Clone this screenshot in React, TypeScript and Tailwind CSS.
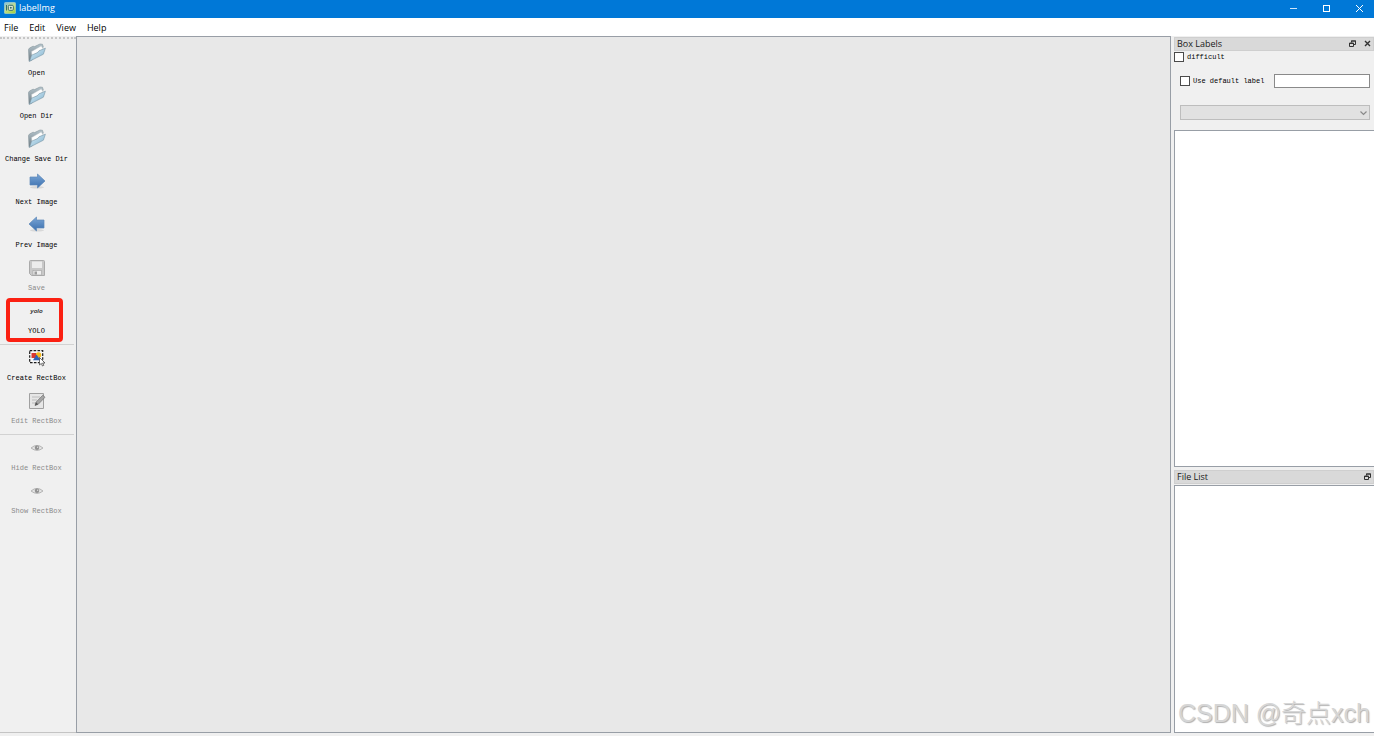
import React from "react";

function FolderIcon() {
  return (
    <svg width="20" height="20" viewBox="0 0 20 20">
      <defs>
        <linearGradient id="folder-front" x1="0" y1="0" x2="1" y2="1">
          <stop offset="0" stopColor="#d8edf7" />
          <stop offset="1" stopColor="#7fb0cd" />
        </linearGradient>
        <linearGradient id="folder-back" x1="0" y1="0" x2="0" y2="1">
          <stop offset="0" stopColor="#b5c5cd" />
          <stop offset="1" stopColor="#6d7a81" />
        </linearGradient>
      </defs>
      <path d="M1.5 6.5 L2.5 5 L6 3.2 L7.5 3.6 L13 1 L15.5 1.3 L16.3 4 L5 17 L2 18.3 Z" fill="url(#folder-back)" stroke="#87959c" strokeWidth="0.6" />
      <path d="M4.5 8.5 L14.3 2.8 L16.2 6 L5 13.5 Z" fill="#fdfdfd" stroke="#b4bcc0" strokeWidth="0.5" />
      <path d="M2.5 18.3 L4.6 12.2 L10.5 9.6 L12 7.8 L18.4 5.2 L16.4 11.2 Z" fill="url(#folder-front)" stroke="#7895a5" strokeWidth="0.6" />
    </svg>
  );
}

function ArrowIcon({ left = false }: { left?: boolean }) {
  return (
    <svg width="20" height="20" viewBox="0 0 20 20">
      <defs>
        <linearGradient id="arrow-fill" x1="0" y1="0" x2="0" y2="1">
          <stop offset="0" stopColor="#7ba6d6" />
          <stop offset="1" stopColor="#3a6fae" />
        </linearGradient>
      </defs>
      <ellipse cx="10" cy="15.3" rx="7" ry="1.2" fill="#d8d8d8" />
      <path
        d={left ? "M2 9 L9.5 2 V5 H17 V13 H9.5 V16 Z" : "M18 9 L10.5 2 V5 H3 V13 H10.5 V16 Z"}
        fill="url(#arrow-fill)"
        stroke="#5c86b8"
        strokeWidth="0.7"
      />
    </svg>
  );
}

function SaveIcon() {
  return (
    <svg width="20" height="20" viewBox="0 0 20 20">
      <path d="M3.5 2.5 H16.5 Q17.5 2.5 17.5 3.5 V17.5 H4.5 L2.5 15.5 V3.5 Q2.5 2.5 3.5 2.5 Z" fill="#c8c8c8" stroke="#aaaaaa" />
      <rect x="5" y="3.5" width="10" height="6.5" fill="#ececec" />
      <rect x="6" y="12.5" width="8.5" height="4.5" fill="#eeeeee" stroke="#a2a2a2" strokeWidth="0.6" />
      <rect x="7.5" y="13.5" width="2.5" height="3" fill="#9c9c9c" />
    </svg>
  );
}

function CreateIcon() {
  return (
    <svg width="20" height="20" viewBox="0 0 20 20">
      <rect x="2.7" y="2.7" width="13" height="12" fill="#f7f7f7" stroke="#1c1c1c" strokeWidth="1.2" strokeDasharray="2.6 1.3" />
      <circle cx="11.5" cy="7" r="2.8" fill="#f4b91e" />
      <path d="M4.5 5 H9 V10 H4.5 Z" fill="#d9382f" />
      <path d="M6 12.3 L9.5 6.5 L13.5 12.3 Z" fill="#2f62b5" />
      <path d="M12.5 9.5 V17 L14.3 15.4 L15.5 18 L16.8 17.3 L15.6 15 H18 Z" fill="#fff" stroke="#333" strokeWidth="0.7" />
    </svg>
  );
}

function EditIcon() {
  return (
    <svg width="20" height="20" viewBox="0 0 20 20">
      <path d="M2.5 2.5 H16.5 V17.5 H2.5 Z" fill="#e6e6e6" stroke="#a0a0a0" />
      <path d="M5 6 H13 M5 9 H10 M5 12 H8" stroke="#bcbcbc" />
      <path d="M8 14.5 L9 11.2 L15.8 4.2 L18 6.3 L11.2 13.3 Z" fill="#a5a5a5" stroke="#707070" strokeWidth="0.7" />
      <path d="M8 14.5 L9 11.2 L11.2 13.3 Z" fill="#555" />
    </svg>
  );
}

function EyeIcon() {
  return (
    <svg width="20" height="20" viewBox="0 0 20 20">
      <path d="M4 10 Q10 4.8 16 10 Q10 14.8 4 10 Z" fill="#e3e3e3" stroke="#b5b5b5" strokeWidth="1" />
      <circle cx="10" cy="9.8" r="2.2" fill="#919191" />
      <circle cx="10.6" cy="9.2" r="0.7" fill="#ddd" />
    </svg>
  );
}

function YoloIcon() {
  return <span className="font-['Liberation_Sans'] text-[6px] leading-5 font-bold text-[#333] italic">yolo</span>;
}

function AppIcon() {
  return (
    <svg width="12" height="12" viewBox="0 0 12 12">
      <defs>
        <linearGradient id="app-icon" x1="0" y1="0" x2="0.6" y2="1">
          <stop offset="0" stopColor="#7fbfe4" />
          <stop offset="0.6" stopColor="#c4e08c" />
          <stop offset="1" stopColor="#a5d14b" />
        </linearGradient>
      </defs>
      <rect x="0.3" y="0.3" width="11.4" height="11.4" rx="1.5" fill="url(#app-icon)" stroke="#a9d2d0" strokeWidth="0.6" />
      <path d="M2.5 3 V8.5" stroke="#376a68" />
      <rect x="4.3" y="3.3" width="5" height="5" rx="1" fill="#e8f2d8" stroke="#376a68" />
      <circle cx="6.8" cy="5.8" r="1" fill="#376a68" />
    </svg>
  );
}

function FloatIcon() {
  return (
    <svg width="7" height="7" viewBox="0 0 7 7" fill="none" stroke="#333">
      <path d="M2.5 2.5 V1 H6.5 V4.5 H5 M2 1 H7" />
      <path d="M0.5 3 H4.5 V6.5 H0.5 Z M0 3.5 H5" />
    </svg>
  );
}

function CloseIcon() {
  return (
    <svg width="7" height="7" viewBox="0 0 7 7">
      <path d="M1 1 L6 6 M6 1 L1 6" stroke="#333" strokeWidth="1.4" />
    </svg>
  );
}

type Tool = {
  label: string;
  icon: React.ReactNode;
  disabled?: boolean;
  highlighted?: boolean;
};

const toolGroups: Tool[][] = [
  [
    { label: "Open", icon: <FolderIcon /> },
    { label: "Open Dir", icon: <FolderIcon /> },
    { label: "Change Save Dir", icon: <FolderIcon /> },
    { label: "Next Image", icon: <ArrowIcon /> },
    { label: "Prev Image", icon: <ArrowIcon left /> },
    { label: "Save", icon: <SaveIcon />, disabled: true },
    { label: "YOLO", icon: <YoloIcon />, highlighted: true },
  ],
  [
    { label: "Create RectBox", icon: <CreateIcon /> },
    { label: "Edit RectBox", icon: <EditIcon />, disabled: true },
  ],
  [
    { label: "Hide RectBox", icon: <EyeIcon />, disabled: true },
    { label: "Show RectBox", icon: <EyeIcon />, disabled: true },
  ],
];

function ToolButton({ label, icon, disabled, highlighted }: Tool) {
  return (
    <button
      disabled={disabled}
      className="relative flex h-[43px] w-full flex-col items-center gap-[5px] pt-[3px] pr-[3px] text-black disabled:text-[#8a8a8a]"
    >
      <span className="flex h-5 items-center">{icon}</span>
      <span className="font-['Liberation_Mono',monospace] text-[7px] leading-[10px] font-medium whitespace-nowrap">{label}</span>
      {highlighted && <span className="absolute top-0 -bottom-px left-[6px] w-[57px] rounded-[4px] border-4 border-[#fb2012]" />}
    </button>
  );
}

function DockTitle({ title, closable }: { title: string; closable?: boolean }) {
  return (
    <div className="flex h-[14px] shrink-0 items-center gap-2 border border-[#cfcfcf] bg-[#d9d9d9] pr-[2px] pl-[2px]">
      <h2 className="flex-1 text-[9px] leading-3 text-[#1a1a1a]">{title}</h2>
      <button aria-label="Float" className="pb-px">
        <FloatIcon />
      </button>
      {closable && (
        <button aria-label="Close" className="pb-px">
          <CloseIcon />
        </button>
      )}
    </div>
  );
}

const checkboxClass = "size-[10px] shrink-0 appearance-none border border-[#4a4a4a] bg-white";

export default function App() {
  return (
    <div className="relative flex h-screen flex-col overflow-hidden bg-[#f0f0f0] font-['Open_Sans',sans-serif] text-[9px] text-black">
      <header className="flex h-[18px] shrink-0 items-center bg-[#0078d7] pr-[10px] pb-[2px] pl-1 text-white">
        <AppIcon />
        <h1 className="flex-1 pl-[3px] leading-3">labelImg</h1>
        <div className="flex items-center gap-6">
          <button aria-label="Minimize">
            <svg width="9" height="9" viewBox="0 0 9 9">
              <path d="M1 4.5 H8" stroke="#cfe6f9" />
            </svg>
          </button>
          <button aria-label="Maximize">
            <svg width="9" height="9" viewBox="0 0 9 9">
              <rect x="1.5" y="1.5" width="6" height="6" fill="none" stroke="#fff" />
            </svg>
          </button>
          <button aria-label="Close window">
            <svg width="9" height="9" viewBox="0 0 9 9">
              <path d="M1 1 L8 8 M8 1 L1 8" stroke="#fff" />
            </svg>
          </button>
        </div>
      </header>

      <nav className="flex h-[18px] shrink-0 items-center gap-[11px] bg-white pt-[2px] pl-1">
        <button>File</button>
        <button>Edit</button>
        <button>View</button>
        <button>Help</button>
      </nav>

      <div className="flex min-h-0 flex-1">
        <aside className="flex w-[76px] shrink-0 flex-col border-b border-[#c4c4c4]">
          <div className="h-1 shrink-0 pt-[1px]">
            <div className="border-t-2 border-dotted border-[#c6c6c6]" />
          </div>
          {toolGroups.map((group, i) => (
            <div key={i}>
              {i > 0 && <div className="mr-[2px] h-1 border-b border-[#d2d2d2]" />}
              {group.map((tool) => (
                <ToolButton key={tool.label} {...tool} />
              ))}
            </div>
          ))}
        </aside>

        <main className="flex-1 border border-[#989ea6] bg-[#e8e8e8]" />

        <div className="ml-[3px] flex w-[200px] shrink-0 flex-col gap-[3px]">
          <section className="flex min-h-0 flex-[431] flex-col pt-[1px]">
            <DockTitle title="Box Labels" closable />
            <div className="font-['Liberation_Mono',monospace] text-[7px] leading-[10px] font-medium">
              <label className="flex items-center gap-[3px] pt-[1px]">
                <input type="checkbox" className={checkboxClass} />
                difficult
              </label>
              <div className="flex items-center gap-[10px] pt-3 pr-1 pl-[6px]">
                <label className="flex items-center gap-[3px] whitespace-nowrap">
                  <input type="checkbox" className={checkboxClass} />
                  Use default label
                </label>
                <input
                  type="text"
                  aria-label="Default label"
                  className="h-[14px] min-w-0 flex-1 border border-[#8a8a8a] bg-white px-1"
                />
              </div>
              <div className="relative mt-[17px] mr-1 mb-[10px] ml-[6px]">
                <select
                  disabled
                  aria-label="Label filter"
                  className="block h-[15px] w-full appearance-none border border-[#bdbdbd] bg-[#e1e1e1]"
                />
                <svg width="7" height="5" viewBox="0 0 7 5" className="absolute top-[6px] right-[3px]">
                  <path d="M0.5 0.5 L3.5 3.5 L6.5 0.5" fill="none" stroke="#8a8a8a" strokeWidth="1.2" />
                </svg>
              </div>
            </div>
            <div className="flex-1 border border-r-0 border-[#989ea6] bg-white" />
          </section>
          <section className="flex min-h-0 flex-[263] flex-col">
            <DockTitle title="File List" />
            <div className="mt-[1px] flex-1 border border-r-0 border-[#989ea6] bg-white" />
          </section>
        </div>
      </div>

      <footer className="h-[3px] shrink-0 bg-[#f0f0f0]" />

      <div className="pointer-events-none absolute right-1 bottom-[5px] font-['Liberation_Sans','Noto_Sans_CJK_SC',sans-serif] text-[25px] leading-9 font-light whitespace-nowrap text-[#d6d6d6] [text-shadow:1px_1px_1px_#b0b0b0]">
        CSDN @奇点xch
      </div>
    </div>
  );
}
